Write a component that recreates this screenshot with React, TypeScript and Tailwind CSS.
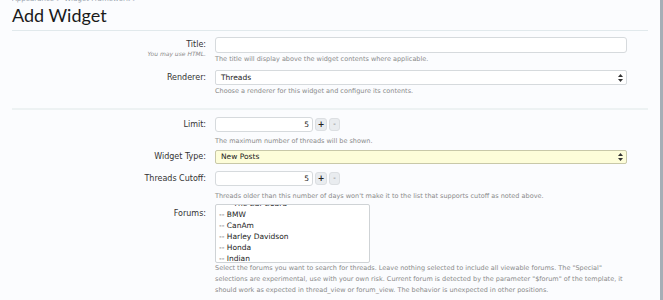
import type { ReactNode } from 'react'

function Arrows() {
  return (
    <svg width="5" height="8" viewBox="0 0 5 8" className="shrink-0">
      <path d="M2.5 0 L5 3 L0 3 Z" fill="#333" />
      <path d="M2.5 8 L5 5 L0 5 Z" fill="#333" />
    </svg>
  )
}

function Row({ label, hint, lh, children }: { label: string; hint?: string; lh: string; children: ReactNode }) {
  return (
    <div className="flex">
      <div className="w-[203px] pr-[9px] text-right">
        <div className={'text-[8px] text-[#333] ' + lh}>{label}</div>
        {hint && <div className="text-[6px] italic leading-[3px] text-[#8a8a8a]">{hint}</div>}
      </div>
      <div className="flex-1">{children}</div>
    </div>
  )
}

function Help({ className = '', children }: { className?: string; children: ReactNode }) {
  return <div className={'text-[6.5px] leading-[11px] text-[#8a8a8a] ' + className}>{children}</div>
}

function Spinner() {
  return (
    <div className="flex items-center gap-[2px]">
      <div className="w-[98px] h-[15px] bg-white border border-[#d6dadd] rounded-[3px] text-[7.5px] text-[#222] text-right pr-[3px] leading-[13px]">
        5
      </div>
      <button className="w-[12px] h-[13px] rounded-[3px] bg-[#e9ecef] border border-[#dcdfe2] text-[8px] leading-[11px] text-[#222] font-bold">
        +
      </button>
      <button className="w-[11px] h-[13px] rounded-[3px] bg-[#e9ecef] border border-[#dcdfe2] text-[7px] leading-[11px] text-[#666]">
        -
      </button>
    </div>
  )
}

function Select({ value, yellow, h }: { value: string; yellow?: boolean; h: string }) {
  return (
    <div
      className={
        'w-[412px] border rounded-[2px] flex items-center justify-between pl-[5px] pr-[3px] text-[7.5px] text-[#222] ' +
        h +
        (yellow ? ' bg-[#fdfdd9] border-[#c8c8a8]' : ' bg-white border-[#d6dadd]')
      }
    >
      <span>{value}</span>
      <Arrows />
    </div>
  )
}

export default function App() {
  const forums = ['The Bar Board', 'BMW', 'CanAm', 'Harley Davidson', 'Honda', 'Indian']
  return (
    <div
      className="w-[663px] h-[300px] overflow-hidden bg-[#fbfcfe] flex"
      style={{ fontFamily: '"DejaVu Sans", Verdana, sans-serif' }}
    >
      <div className="flex-1 pl-3 pr-[12px]">
        <div className="h-[4px] overflow-hidden">
          <div className="-mt-[5px] text-[7px] leading-[9px] text-[#9aa4ae]">Appearance &gt; Widget Framework &gt;</div>
        </div>
        <h1 className="text-[18px] leading-[22px] text-[#1a1a1a]" style={{ fontFamily: 'Lato, "DejaVu Sans", sans-serif' }}>
          Add Widget
        </h1>
        <div className="mt-[4px] h-[1px] bg-[#e1e9ec]" />

        <div className="mt-[6px]">
          <Row label="Title:" hint="You may use HTML." lh="leading-[15px]">
            <div className="w-[412px] h-[16px] bg-white border border-[#d6dadd] rounded-[3px]" />
            <Help className="mt-[1px]">The title will display above the widget contents where applicable.</Help>
          </Row>
        </div>
        <div className="mt-[5px]">
          <Row label="Renderer:" lh="leading-[15px]">
            <Select value="Threads" h="h-[15px]" />
            <Help className="mt-[1px]">Choose a renderer for this widget and configure its contents.</Help>
          </Row>
        </div>

        <div className="mt-[11px] h-[2px] bg-[#edf2f3]" />

        <div className="mt-[7px]">
          <Row label="Limit:" lh="leading-[15px]">
            <Spinner />
            <Help className="mt-[4px]">The maximum number of threads will be shown.</Help>
          </Row>
        </div>
        <div className="mt-[3px]">
          <Row label="Widget Type:" lh="leading-[14px]">
            <Select value="New Posts" yellow h="h-[14px]" />
          </Row>
        </div>
        <div className="mt-[7px]">
          <Row label="Threads Cutoff:" lh="leading-[15px]">
            <Spinner />
            <Help className="mt-[5px]">
              Threads older than this number of days won't make it to the list that supports cutoff as noted above.
            </Help>
          </Row>
        </div>
        <div className="mt-[2px]">
          <Row label="Forums:" lh="leading-[20px]">
            <div className="w-[155px] h-[59px] bg-white border border-[#cfd3d6] rounded-[2px] overflow-hidden">
              <div className="-mt-[7px] pl-[3px] text-[7.5px] leading-[11px] text-[#222]">
                {forums.map((f, i) => (
                  <div key={f}>
                    <span className="text-[#555]">{i === 0 ? '\u00a0\u00a0\u00a0\u00a0\u00a0' : '--'}</span> {f}
                  </div>
                ))}
              </div>
            </div>
            <Help className="whitespace-nowrap">
              Select the forums you want to search for threads. Leave nothing selected to include all viewable forums. The "Special"
              <br />
              selections are experimental, use with your own risk. Current forum is detected by the parameter "$forum" of the template, it
              <br />
              should work as expected in thread_view or forum_view. The behavior is unexpected in other positions.
            </Help>
          </Row>
        </div>
      </div>
      <div className="w-[3px] bg-[#a6aeb6]" />
    </div>
  )
}
